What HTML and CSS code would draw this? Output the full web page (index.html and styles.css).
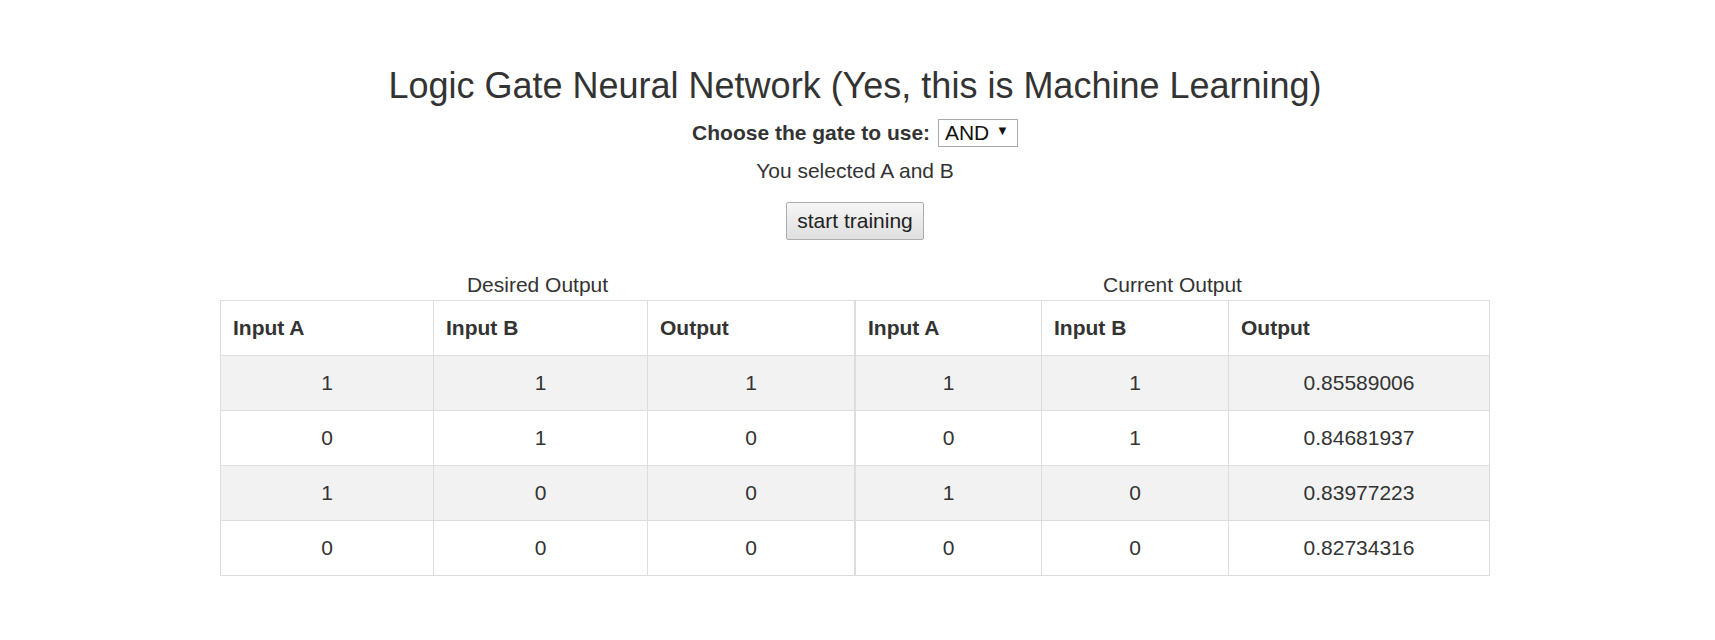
FILE: index.html
```html
<!DOCTYPE html>
<html lang="en">
<head>
<meta charset="utf-8">
<title>Logic Gate Neural Network</title>
<link rel="stylesheet" href="styles.css">
</head>
<body>
<div class="page">
  <h1 class="title">Logic Gate Neural Network (Yes, this is Machine Learning)</h1>
  <div class="gate-row">
    <label class="gate-label" for="gate">Choose the gate to use:</label>
    <span class="select-wrap"><select id="gate" class="gate-select"><option>AND</option><option>OR</option><option>XOR</option></select></span>
  </div>
  <p class="selected">You selected A and B</p>
  <div class="actions"><button class="train-btn" type="button">start training</button></div>
  <div class="tables">
    <table class="grid">
      <caption>Desired Output</caption>
      <colgroup><col class="c-l1"><col class="c-l2"><col class="c-l3"></colgroup>
      <thead><tr><th>Input A</th><th>Input B</th><th>Output</th></tr></thead>
      <tbody>
        <tr><td>1</td><td>1</td><td>1</td></tr>
        <tr><td>0</td><td>1</td><td>0</td></tr>
        <tr><td>1</td><td>0</td><td>0</td></tr>
        <tr><td>0</td><td>0</td><td>0</td></tr>
      </tbody>
    </table>
    <table class="grid">
      <caption>Current Output</caption>
      <colgroup><col class="c-r1"><col class="c-r2"><col class="c-r3"></colgroup>
      <thead><tr><th>Input A</th><th>Input B</th><th>Output</th></tr></thead>
      <tbody>
        <tr><td>1</td><td>1</td><td>0.85589006</td></tr>
        <tr><td>0</td><td>1</td><td>0.84681937</td></tr>
        <tr><td>1</td><td>0</td><td>0.83977223</td></tr>
        <tr><td>0</td><td>0</td><td>0.82734316</td></tr>
      </tbody>
    </table>
  </div>
</div>
</body>
</html>
```
FILE: styles.css
```css
html, body {
  margin: 0;
  padding: 0;
  background: #ffffff;
}
body {
  font-family: "Liberation Sans", Arial, Helvetica, sans-serif;
  font-size: 21px;
  line-height: 30px;
  color: #333333;
}
.page {
  padding: 66px 5px 0 0;
  text-align: center;
}
.title {
  margin: 0;
  font-size: 36px;
  line-height: 40px;
  font-weight: 400;
  color: #333333;
}
.gate-row {
  margin-top: 12px;
  height: 30px;
}
.gate-label {
  font-weight: 700;
}
.select-wrap {
  position: relative;
  display: inline-block;
  margin-left: 2px;
}
.select-wrap::after {
  content: "\25BC";
  position: absolute;
  right: 9px;
  top: 6px;
  font-size: 13px;
  line-height: 14px;
  color: #111111;
  pointer-events: none;
}
.gate-select {
  -webkit-appearance: none;
  appearance: none;
  width: 80px;
  height: 28px;
  box-sizing: border-box;
  padding: 0 0 0 6px;
  border: 1px solid #a9a9a9;
  border-radius: 0;
  background: #ffffff;
  font-family: inherit;
  font-size: 21px;
  color: #111111;
  vertical-align: baseline;
}
.selected {
  margin: 8px 0 0;
}
.actions {
  margin-top: 16px;
}
.train-btn {
  width: 138px;
  height: 38px;
  box-sizing: border-box;
  padding: 0;
  border: 1px solid #adadad;
  border-radius: 2px;
  background: linear-gradient(#f6f6f6, #dfdfdf);
  font-family: inherit;
  font-size: 21px;
  color: #222222;
}
.tables {
  display: flex;
  justify-content: center;
  margin-top: 30px;
}
.grid {
  width: 634px;
  table-layout: fixed;
  border-collapse: collapse;
}
.grid caption {
  padding: 0;
  text-align: center;
  color: #333333;
  line-height: 30px;
}
.c-l1 { width: 213px; }
.c-l2 { width: 214px; }
.c-l3 { width: 207px; }
.c-r1 { width: 186px; }
.c-r2 { width: 187px; }
.c-r3 { width: 261px; }
.grid th,
.grid td {
  border: 1px solid #dddddd;
  padding: 12px;
  line-height: 30px;
}
.grid th {
  text-align: left;
  font-weight: 700;
}
.grid td {
  text-align: center;
}
.grid tbody tr:nth-child(odd) {
  background: #f2f2f2;
}
```
